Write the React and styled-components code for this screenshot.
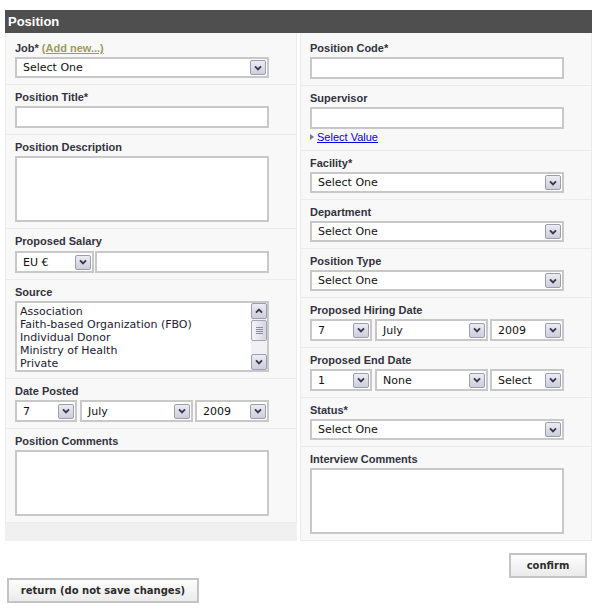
import React from "react";
import styled, { createGlobalStyle } from "styled-components";

const GlobalStyle = createGlobalStyle`
  body {
    margin: 0;
    background: #ffffff;
    font-family: "Liberation Sans", Arial, sans-serif;
  }
`;

const Page = styled.div`
  width: 587px;
  padding: 10px 2px 0 5px;
`;

const TitleBar = styled.h2`
  margin: 0;
  height: 23px;
  padding-left: 3px;
  background: #4f4f4f;
  color: #ffffff;
  font: bold 13px "Liberation Sans", Arial, sans-serif;
  line-height: 24px;
`;

const Columns = styled.div`
  display: grid;
  grid-template-columns: 292px 292px;
  column-gap: 3px;
`;

const Column = styled.div`
  background: ${(p) => (p.$filler ? "#f0f0f0" : "#f8f8f8")};
`;

const Row = styled.div`
  background: #f8f8f8;
  border: 1px solid #ebebeb;
  border-top: none;
  padding: 5px 0 6px 9px;

  &:first-child {
    padding-top: 8px;
  }
`;

const Label = styled.label`
  display: block;
  font: bold 11px/14px "Liberation Sans", Arial, sans-serif;
  color: #333340;
  margin-bottom: ${(p) => p.$gap || 2}px;
`;

const AddLink = styled.a`
  color: #a09a5c;
  text-decoration: underline;
  margin-left: 3px;
  cursor: pointer;
`;

const TextInput = styled.div`
  box-sizing: border-box;
  width: ${(p) => p.$w || 254}px;
  height: ${(p) => p.$h || 22}px;
  border: 2px solid #c8c8c8;
  background: #ffffff;
`;

const FieldLine = styled.div`
  display: flex;
  gap: ${(p) => p.$gap || 0}px;
`;

const SelectFrame = styled.div`
  box-sizing: border-box;
  width: ${(p) => p.$w || 254}px;
  height: ${(p) => p.$h || 21}px;
  border: 2px solid #c8c8c8;
  background: #ffffff;
  display: flex;
  align-items: center;
  padding-right: 1px;
`;

const SelectValue = styled.span`
  flex: 1;
  padding-left: 6px;
  font: 11px "DejaVu Sans", Verdana, sans-serif;
  color: #111;
  white-space: nowrap;
  overflow: hidden;
`;

const ArrowButton = styled.span`
  box-sizing: border-box;
  width: 16px;
  height: 15px;
  border: 1px solid #9d9db0;
  border-radius: 2px;
  background: linear-gradient(#ececf4, #cdcddc);
  display: flex;
  align-items: center;
  justify-content: center;
  flex-shrink: 0;
`;

const Chevron = ({ up }) => (
  <svg width="10" height="10" viewBox="0 0 10 10">
    <path
      d={up ? "M2 6.6 L5 3.6 L8 6.6" : "M2 3.4 L5 6.4 L8 3.4"}
      fill="none"
      stroke="#3a3a4c"
      strokeWidth="2"
    />
  </svg>
);

const Select = ({ value, w, h }) => (
  <SelectFrame $w={w} $h={h}>
    <SelectValue>{value}</SelectValue>
    <ArrowButton>
      <Chevron />
    </ArrowButton>
  </SelectFrame>
);

const ListBox = styled.div`
  box-sizing: border-box;
  width: 254px;
  height: 71px;
  border: 2px solid #c8c8c8;
  background: #ffffff;
  display: flex;
`;

const Options = styled.ul`
  flex: 1;
  margin: 0;
  padding: 2px 0 0 3px;
  list-style: none;
  overflow: hidden;
  font: 11px/13px "DejaVu Sans", Verdana, sans-serif;
  color: #221a33;
`;

const ScrollBar = styled.div`
  width: 16px;
  display: flex;
  flex-direction: column;
  background: #f1f1f5;
`;

const ScrollButton = styled(ArrowButton)`
  width: 16px;
  height: 16px;
`;

const Thumb = styled.div`
  box-sizing: border-box;
  height: 21px;
  margin-top: 1px;
  border: 1px solid #a4a4b6;
  border-radius: 2px;
  background: linear-gradient(90deg, #f4f4f8, #d6d6e2);
  display: flex;
  flex-direction: column;
  align-items: center;
  justify-content: center;
  gap: 1px;
`;

const Grip = styled.span`
  width: 7px;
  height: 1px;
  background: #8c8c9c;
`;

const Track = styled.div`
  flex: 1;
`;

const SubLink = styled.div`
  margin-top: 1px;
  font: 11px/14px "Liberation Sans", Arial, sans-serif;
  display: flex;
  align-items: center;
  gap: 3px;

  a {
    color: #0000ee;
    text-decoration: underline;
    cursor: pointer;
  }
`;

const Actions = styled.div`
  display: flex;
  flex-direction: column;
  margin-top: 12px;
`;

const Button = styled.button`
  box-sizing: border-box;
  width: ${(p) => p.$w}px;
  height: 25px;
  border: 2px solid #c4c4c4;
  background: linear-gradient(#fdfdfd, #ebebeb);
  font: bold 10px "DejaVu Sans", Verdana, sans-serif;
  color: #2c2c2c;
  padding: 0;
  align-self: ${(p) => (p.$right ? "flex-end" : "flex-start")};
  margin: ${(p) => (p.$right ? "0 5px 0 0" : "0 0 0 2px")};
  cursor: pointer;
`;

const sources = [
  "Association",
  "Faith-based Organization (FBO)",
  "Individual Donor",
  "Ministry of Health",
  "Private",
];

const DateSelects = ({ day, month, year }) => (
  <FieldLine>
    <Select value={day} w={62} h={22} />
    <span style={{ width: 3 }} />
    <Select value={month} w={113} h={22} />
    <span style={{ width: 2 }} />
    <Select value={year} w={74} h={22} />
  </FieldLine>
);

export default function App() {
  return (
    <Page>
      <GlobalStyle />
      <TitleBar>Position</TitleBar>
      <Columns>
        <Column $filler>
          <Row>
            <Label>
              Job*<AddLink>(Add new...)</AddLink>
            </Label>
            <Select value="Select One" />
          </Row>
          <Row>
            <Label>Position Title*</Label>
            <TextInput />
          </Row>
          <Row>
            <Label>Position Description</Label>
            <TextInput $h={66} />
          </Row>
          <Row>
            <Label $gap={3}>Proposed Salary</Label>
            <FieldLine $gap={1}>
              <Select value="EU €" w={79} h={22} />
              <TextInput $w={174} />
            </FieldLine>
          </Row>
          <Row>
            <Label>Source</Label>
            <ListBox>
              <Options>
                {sources.map((s) => (
                  <li key={s}>{s}</li>
                ))}
              </Options>
              <ScrollBar>
                <ScrollButton>
                  <Chevron up />
                </ScrollButton>
                <Thumb>
                  <Grip />
                  <Grip />
                  <Grip />
                  <Grip />
                </Thumb>
                <Track />
                <ScrollButton>
                  <Chevron />
                </ScrollButton>
              </ScrollBar>
            </ListBox>
          </Row>
          <Row>
            <Label>Date Posted</Label>
            <DateSelects day="7" month="July" year="2009" />
          </Row>
          <Row>
            <Label>Position Comments</Label>
            <TextInput $h={66} />
          </Row>
        </Column>
        <Column>
          <Row>
            <Label>Position Code*</Label>
            <TextInput />
          </Row>
          <Row>
            <Label>Supervisor</Label>
            <TextInput />
            <SubLink>
              <svg width="4" height="6" viewBox="0 0 4 6">
                <path d="M0 0 L4 3 L0 6 Z" fill="#7a7a7a" />
              </svg>
              <a>Select Value</a>
            </SubLink>
          </Row>
          <Row>
            <Label>Facility*</Label>
            <Select value="Select One" />
          </Row>
          <Row>
            <Label>Department</Label>
            <Select value="Select One" />
          </Row>
          <Row>
            <Label>Position Type</Label>
            <Select value="Select One" />
          </Row>
          <Row>
            <Label>Proposed Hiring Date</Label>
            <DateSelects day="7" month="July" year="2009" />
          </Row>
          <Row>
            <Label>Proposed End Date</Label>
            <DateSelects day="1" month="None" year="Select" />
          </Row>
          <Row>
            <Label>Status*</Label>
            <Select value="Select One" />
          </Row>
          <Row>
            <Label>Interview Comments</Label>
            <TextInput $h={66} />
          </Row>
        </Column>
      </Columns>
      <Actions>
        <Button $w={78} $right>
          confirm
        </Button>
        <Button $w={192}>return (do not save changes)</Button>
      </Actions>
    </Page>
  );
}
